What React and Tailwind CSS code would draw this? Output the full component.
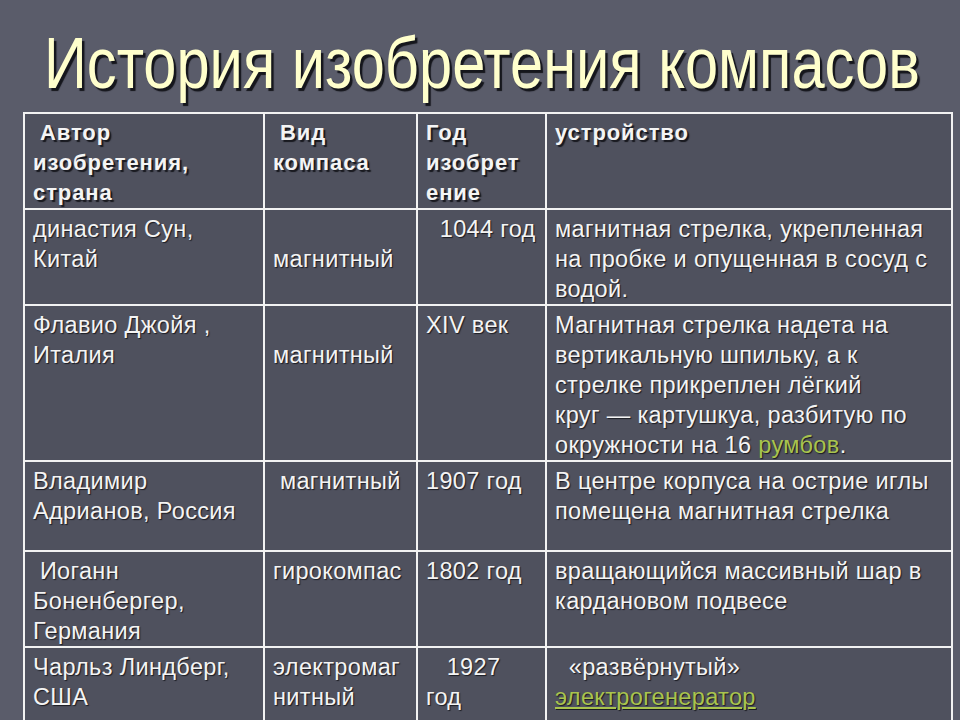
const rows = [
  {
    h: "h-[96px]",
    cells: [
      ["династия Сун,", "Китай"],
      ["", "магнитный"],
      ["\u00a0\u00a01044 год"],
      ["магнитная стрелка, укрепленная", "на пробке и опущенная в сосуд с", "водой."],
    ],
  },
  {
    h: "h-[156px]",
    cells: [
      ["Флавио Джойя ,", "Италия"],
      ["", "магнитный"],
      ["XIV век"],
      [
        "Магнитная стрелка надета на",
        "вертикальную шпильку, а к",
        "стрелке прикреплен лёгкий",
        "круг — картушкуа, разбитую по",
        <>
          окружности на 16 <span className="text-[#a9c44e]">румбов</span>.
        </>,
      ],
    ],
  },
  {
    h: "h-[90px]",
    cells: [
      ["Владимир", "Адрианов, Россия"],
      ["\u00a0магнитный"],
      ["1907 год"],
      ["В центре корпуса на острие иглы", "помещена магнитная стрелка"],
    ],
  },
  {
    h: "h-[96px]",
    cells: [
      ["\u00a0Иоганн", "Боненбергер,", "Германия"],
      ["гирокомпас"],
      ["1802 год"],
      ["вращающийся массивный шар в", "кардановом подвесе"],
    ],
  },
  {
    h: "h-[76px]",
    cells: [
      ["Чарльз Линдберг,", "США"],
      ["электромаг", "нитный"],
      ["\u00a0\u00a0\u00a01927", "год"],
      [
        "\u00a0\u00a0«развёрнутый»",
        <span className="text-[#a9c44e] underline underline-offset-2">электрогенератор</span>,
      ],
    ],
  },
];

const header = [
  ["\u00a0Автор", "изобретения,", "страна"],
  ["\u00a0Вид", "компаса"],
  ["Год", "изобрет", "ение"],
  ["устройство"],
];

function Cell({ lines, bold }) {
  return (
    <td className="border-2 border-[#f2f2f2] align-top pl-[8px] pr-0 pt-[4px] overflow-hidden">
      {lines.map((l, i) => (
        <div
          key={i}
          className={`h-[30px] leading-[30px] whitespace-nowrap ${
            bold ? "font-bold text-[22px] tracking-[0.9px] [text-shadow:2px_2px_1px_#17181e]" : "tracking-[0.35px]"
          }`}
        >
          {l === "" ? "\u00a0" : l}
        </div>
      ))}
    </td>
  );
}

export default function App() {
  return (
    <div
      className="w-[960px] h-[720px] overflow-hidden bg-[#5a5c6a] text-[#f4f4f4]"
      style={{ fontFamily: '"Liberation Sans", Arial, sans-serif' }}
    >
      <div className="h-[112px] pl-[44px] pt-[31px]">
        <h1
          className="inline-block origin-left scale-x-[0.828] whitespace-nowrap text-[#ffffcc] text-[72px] leading-[64px]"
          style={{ textShadow: "3px 3px 1px #15161c" }}
        >
          История изобретения компасов
        </h1>
      </div>
      <table className="ml-[23px] w-[928px] border-collapse table-fixed text-[23.5px] [text-shadow:1px_1px_1px_#1a1b22]">
        <colgroup>
          <col className="w-[240px]" />
          <col className="w-[153px]" />
          <col className="w-[129px]" />
          <col className="w-[406px]" />
        </colgroup>
        <tbody>
          <tr className="h-[96px] bg-[#4f515e]">
            {header.map((c, i) => (
              <Cell key={i} lines={c} bold />
            ))}
          </tr>
          {rows.map((r, i) => (
            <tr key={i} className={`${r.h} bg-[#4f515e]`}>
              {r.cells.map((c, j) => (
                <Cell key={j} lines={c} />
              ))}
            </tr>
          ))}
        </tbody>
      </table>
    </div>
  );
}
